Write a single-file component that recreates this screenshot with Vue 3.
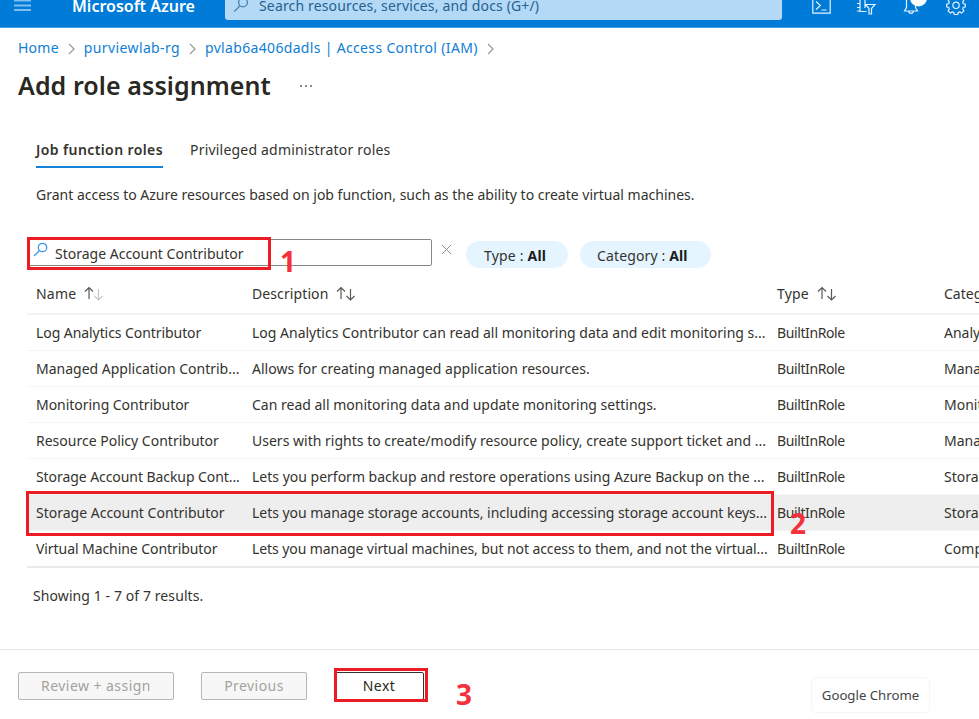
<script setup>
const rows = [
  ['Log Analytics Contributor', 'Log Analytics Contributor can read all monitoring data and edit monitoring s...', 'Analytics', 'n0', 'd0'],
  ['Managed Application Contrib...', 'Allows for creating managed application resources.', 'Management', 'n1', 'd1'],
  ['Monitoring Contributor', 'Can read all monitoring data and update monitoring settings.', 'Monitor', 'n2', 'd2'],
  ['Resource Policy Contributor', 'Users with rights to create/modify resource policy, create support ticket and ...', 'Management', 'n3', 'd3'],
  ['Storage Account Backup Cont...', 'Lets you perform backup and restore operations using Azure Backup on the ...', 'Storage', 'n4', 'd4'],
  ['Storage Account Contributor', 'Lets you manage storage accounts, including accessing storage account keys...', 'Storage', 'n5', 'd5'],
  ['Virtual Machine Contributor', 'Lets you manage virtual machines, but not access to them, and not the virtual...', 'Compute', 'n6', 'd6'],
]
const columns = [
  { label: 'Name', cls: 'h-name', sort: 'asc' },
  { label: 'Description', cls: 'h-desc', sort: 'both' },
  { label: 'Type', cls: 'h-type', sort: 'both' },
  { label: 'Category', cls: 'h-cat', sort: '' },
]
</script>

<template>
  <div class="page">
    <header class="topbar">
      <svg class="burger" width="17" height="12" viewBox="0 0 17 12"><path d="M0 .5h17M0 5.500h17M0 10h17" /></svg>
      <span class="brand">Microsoft Azure</span>
      <div class="global-search">
        <svg width="16" height="16" viewBox="0 0 16 16"><circle cx="10" cy="5.5" r="4.4" /><path d="M7 8.8L1.2 14.6" /></svg>
        <span>Search resources, services, and docs (G+/)</span>
      </div>
      <div class="tools">
        <svg class="t-shell" width="19" height="18" viewBox="0 0 19 18"><path d="M.8 .5h17.4v15.700H.8zM4 4.5l4.4 4L4 12.500M9.500 13h5" /></svg>
        <svg class="t-filter" width="19" height="18" viewBox="0 0 19 18"><path d="M3 0v14.500h6.500M8 0v11M0 2.500h3M0 6.500h3M0 10.500h3M0 14h3M8.500 7.500h9.500l-3.500 4v5.500h-2.500v-5.500z" /></svg>
        <svg class="t-bell" width="24" height="18" viewBox="0 0 24 18"><path d="M3.500 0v10.500L1.500 14h13l-2-3.500V0M5.500 14.500a2.600 2.600 0 0 0 5 0" /><circle class="badge" cx="15.500" cy="1" r="8.500" /></svg>
        <svg class="t-gear" width="20" height="20" viewBox="0 0 20 20"><path d="M8.300 1.200h3.400l.5 2.300 1.500.6 2-1.200 2.200 2.200-1.200 2 .6 1.500 2 .5v2.800l-2 .5-.6 1.500 1.200 2-2.200 2.200-2-1.200-1.500.6-.5 2H8.300l-.5-2-1.500-.6-2 1.200-2.200-2.200 1.200-2-.6-1.500-2-.5V9.100l2-.5.600-1.500-1.200-2 2.200-2.200 2 1.200 1.500-.6z" /><circle cx="10" cy="10.300" r="3.200" /></svg>
      </div>
    </header>

    <nav class="crumbs">
      <a class="c1">Home</a><svg width="8" height="12" viewBox="0 0 8 12"><path d="M1 1l5 5-5 5" /></svg>
      <a class="c2">purviewlab-rg</a><svg width="8" height="12" viewBox="0 0 8 12"><path d="M1 1l5 5-5 5" /></svg>
      <a class="c3">pvlab6a406dadls | Access Control (IAM)</a><svg width="8" height="12" viewBox="0 0 8 12"><path d="M1 1l5 5-5 5" /></svg>
    </nav>

    <div class="title-row">
      <h1>Add role assignment</h1>
      <svg width="14" height="4" viewBox="0 0 14 4"><path d="M1 1h2v2H1zM6 1h2v2H6zM11 1h2v2h-2z" /></svg>
    </div>

    <div class="tabs">
      <span class="tab active"><span>Job function roles</span></span>
      <span class="tab second"><span>Privileged administrator roles</span></span>
    </div>
    <p class="intro"><span>Grant access to Azure resources based on job function, such as the ability to create virtual machines.</span></p>

    <div class="filters">
      <div class="search-box">
        <svg width="16" height="16" viewBox="0 0 16 16"><circle cx="9.500" cy="5.500" r="4.200" /><path d="M6.500 8.500L1 14" /></svg>
        <span>Storage Account Contributor</span>
      </div>
      <svg class="clear" width="11" height="11" viewBox="0 0 11 11"><path d="M1 1l9 9M10 1l-9 9" /></svg>
      <span class="pill p-type"><span>Type : <b>All</b></span></span>
      <span class="pill p-cat"><span>Category : <b>All</b></span></span>
    </div>

    <div class="table">
      <div class="row head">
        <div v-for="c in columns" :key="c.label" class="cell">
          <span :class="c.cls">{{ c.label }}</span>
          <svg v-if="c.sort" :class="['sort', c.sort]" width="20" height="15" viewBox="0 0 20 15"><path d="M5 13V1.500M1 5.500l4-4 4 4" /><path class="down" d="M14.500 3v11M10.500 10l4 4 4-4" /></svg>
        </div>
      </div>
      <div v-for="(r, i) in rows" :key="r[0]" :class="['row', { selected: i === 5 }]">
        <div class="cell"><span :class="r[3]">{{ r[0] }}</span></div>
        <div class="cell"><span :class="r[4]">{{ r[1] }}</span></div>
        <div class="cell"><span class="builtin">BuiltInRole</span></div>
        <div class="cell"><span class="category">{{ r[2] }}</span></div>
      </div>
    </div>
    <p class="count"><span>Showing 1 - 7 of 7 results.</span></p>

    <footer class="footer">
      <button class="btn b1" disabled><span>Review + assign</span></button>
      <button class="btn b2" disabled><span>Previous</span></button>
      <button class="btn next"><span>Next</span></button>
      <div class="tooltip"><span>Google Chrome</span></div>
    </footer>

    <div class="mark m1"></div>
    <div class="mark m2"></div>
    <div class="mark m3"></div>
    <span class="num u1">1</span>
    <span class="num u2">2</span>
    <span class="num u3">3</span>
  </div>
</template>

<style>
body { background: #fff; overflow: hidden; }
</style>

<style scoped>
.page { position: relative; width: 979px; height: 719px; overflow: hidden; font-family: "Noto Sans", "Open Sans", sans-serif; font-size: 14px; line-height: 20px; color: #34332e; background: #fff; display: flex; flex-direction: column; white-space: nowrap; }
svg { fill: none; stroke: currentColor; flex: none; }
p, h1 { margin: 0; }
.topbar { box-sizing: border-box; height: 28px; flex: none; background: #007bd8; border-bottom: 1px solid #459fe2; color: #fff; display: flex; align-items: flex-start; }
.burger { margin: 0 0 0 14px; color: #7fc0f0; stroke-width: 2; }
.brand { margin: -4px 0 0 41px; width: 153px; font-weight: 600; font-size: 16px; }
.global-search { box-sizing: border-box; width: 557px; height: 20px; padding-left: 8px; background: #b3d9f7; border-radius: 0 0 3px 3px; color: #27618f; display: flex; gap: 10px; }
.global-search svg { margin-top: -3px; color: #4681ae; stroke-width: 1.3; }
.global-search span { margin-top: -4px; letter-spacing: .15px; }
.tools { display: flex; margin-left: 30px; height: 20px; }
.tools svg { stroke: #e4f3ff; stroke-width: 1.2; margin-top: -3px; }
.t-filter { margin-left: 26px; }
.t-bell { margin-left: 27px; }
.t-gear { margin-left: 19px; }
.tools .t-gear { margin-top: -5px; }
.tools .badge { fill: #fff; stroke: none; }
.crumbs { height: 20px; margin: 10px 0 0 18px; display: flex; align-items: center; color: #0f7ed4; flex: none; }
.crumbs svg { color: #999; margin: 2px 8px 0 9px; stroke-width: 1.2; }
.c1 { letter-spacing: .25px; }
.c2 { letter-spacing: .38px; }
.c3 { letter-spacing: .33px; }
.title-row { height: 36px; margin: 9px 0 0 18px; display: flex; align-items: center; flex: none; }
.title-row h1 { width: 281px; font-size: 25px; line-height: 36px; font-weight: 600; color: #292822; letter-spacing: .08px; }
.title-row svg { fill: #8b8b8b; stroke: none; margin-top: 1px; }
.tabs { margin: 37px 0 0 36px; display: flex; gap: 27px; height: 28px; flex: none; }
.tab { height: 25px; padding-bottom: 1px; }
.active { width: 127px; border-bottom: 2px solid #1681d9; font-weight: 600; letter-spacing: .4px; }
.second { letter-spacing: .2px; }
.intro { margin: 17px 0 0 36px; height: 20px; flex: none; }
.filters { display: flex; margin: 34px 0 0 28px; height: 30px; flex: none; }
.search-box { box-sizing: border-box; width: 404px; height: 27px; border: 1px solid #898782; border-radius: 2px; display: flex; padding-left: 4px; }
.search-box svg { color: #3c97e3; margin-top: 2px; stroke-width: 1.3; }
.search-box span { margin: 4px 0 0 6px; }
.clear { margin: 5px 14px 0 9px; color: #8b8b8b; }
.pill { box-sizing: border-box; height: 27px; border-radius: 14px; background: #e5f5ff; padding: 5px 0 0 18px; margin-top: 2px; letter-spacing: .2px; }
.pill b { font-weight: 700; color: #1a1d1d; }
.p-type { width: 102px; }
.p-cat { width: 131px; margin-left: 12px; padding-left: 17px; letter-spacing: .14px; }
.table { margin-left: 27px; flex: none; border-bottom: 2px solid #eaeaea; margin-top: 5px; }
.row { box-sizing: border-box; height: 36px; display: grid; grid-template-columns: 216px 525px 167px 100px; padding: 0 0 0 9px; align-items: center; border-bottom: 1px solid #f5f5f5; width: 1020px; }
.row:last-child { border-bottom: none; height: 35px; padding-top: 1px; }
.head { height: 41px; border-bottom: 2px solid #f3f3f3; }
.selected { background: #eee; }
.cell { display: flex; align-items: center; }
.h-name, .h-type { letter-spacing: .2px; }
.h-desc { letter-spacing: .1px; }
.sort { margin-left: 8px; color: #5a5954; stroke-width: 1.2; }
.asc .down { stroke: #c6c6c6; }
.n0, .n4, .n6 { letter-spacing: -.07px; }
.n2 { letter-spacing: -.04px; }
.d1 { letter-spacing: .03px; }
.d3 { letter-spacing: .01px; }
.d5 { letter-spacing: -.03px; }
.d6 { letter-spacing: -.08px; }
.builtin { letter-spacing: -.4px; }
.count { margin: 18px 0 0 33px; height: 20px; flex: none; letter-spacing: .09px; }
.footer { border-top: 1px solid #e4e4e4; margin-top: 43px; height: 69px; display: flex; align-items: flex-start; padding-left: 18px; flex: none; }
.btn { box-sizing: border-box; font: inherit; height: 28px; margin: 22px 27px 0 0; padding: 0 0 1px; border: 1px solid #b8b6b3; border-radius: 2px; background: #f7f7f7; color: #a4a29f; display: flex; justify-content: center; align-items: center; flex: none; letter-spacing: .45px; }
.b1 { width: 156px; }
.b2 { width: 106px; }
.next { width: 90px; margin-right: 0; background: #fff; border-color: #33322e; color: #292822; }
.tooltip { box-sizing: border-box; width: 119px; height: 36px; margin: 27px 0 0 387px; border: 1px solid #f5f5f5; border-radius: 5px; display: flex; justify-content: center; align-items: center; font-size: 13.200px; color: #444; }
.mark { position: absolute; box-sizing: border-box; border: 3px solid #ed1b24; }
.m1 { left: 27px; top: 237px; width: 244px; height: 33px; }
.m2 { left: 26px; top: 491px; width: 748px; height: 45px; }
.m3 { left: 334px; top: 668px; width: 94px; height: 34px; }
.num { position: absolute; font-size: 28px; font-weight: 700; line-height: 30px; color: #f4313b; }
.u1 { left: 280px; top: 246px; }
.u2 { left: 790px; top: 508px; }
.u3 { left: 456px; top: 679px; }
</style>
